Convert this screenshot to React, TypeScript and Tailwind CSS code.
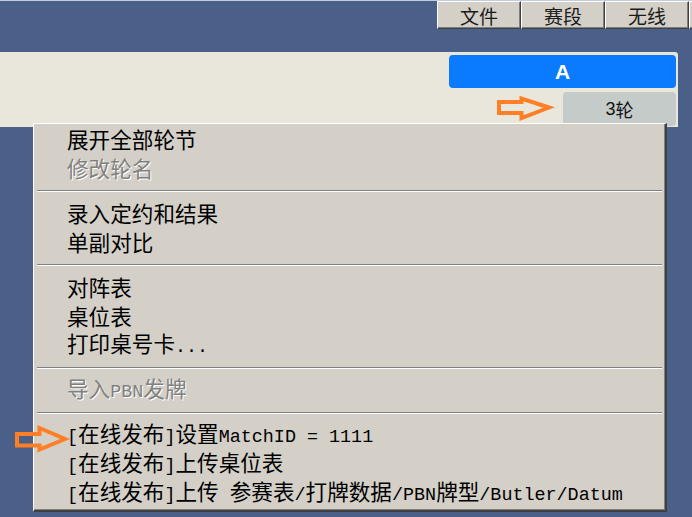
import React from 'react'

type Item = { label: string; disabled?: boolean } | 'sep'

const items: Item[] = [
  { label: '展开全部轮节' },
  { label: '修改轮名', disabled: true },
  'sep',
  { label: '录入定约和结果' },
  { label: '单副对比' },
  'sep',
  { label: '对阵表' },
  { label: '桌位表' },
  { label: '打印桌号卡...' },
  'sep',
  { label: '导入PBN发牌', disabled: true },
  'sep',
  { label: '[在线发布]设置MatchID = 1111' },
  { label: '[在线发布]上传桌位表' },
  { label: '[在线发布]上传 参赛表/打牌数据/PBN牌型/Butler/Datum' },
]

const cjk = "font-['Noto_Sans_CJK_SC',sans-serif]"
const mono = "font-['Liberation_Mono','Noto_Sans_CJK_SC',monospace]"

// split into ascii / cjk runs so each gets its own font and size
function MixedText({ text }: { text: string }) {
  const runs = text.match(/[\x00-\x7f]+|[^\x00-\x7f]+/g) ?? []
  return (
    <span className="whitespace-pre">
      {runs.map((r, i) =>
        /^[\x00-\x7f]/.test(r) ? (
          <span key={i} className={`${mono} text-[18.4px]`}>
            {r}
          </span>
        ) : (
          <span key={i} className={`${cjk} text-[21.6px]`}>
            {r}
          </span>
        )
      )}
    </span>
  )
}

function TopButton({ label }: { label: string }) {
  return (
    <div className="w-[84px] h-[28px] shrink-0 bg-[#d4d0c8] border-t border-l border-t-white border-l-white border-r border-b border-r-[#404040] border-b-[#404040] shadow-[inset_-1px_-1px_0_#808080] flex items-center justify-center">
      <span className={`${cjk} text-[19px] leading-none text-[#1a1a1a]`}>{label}</span>
    </div>
  )
}

export default function App() {
  return (
    <div className="relative w-[692px] h-[517px] overflow-hidden bg-[#4a6089]">
      <div className="h-px bg-[#c3cde0]" />
      <div className="flex h-[28px] pl-[437px]">
        <TopButton label="文件" />
        <TopButton label="赛段" />
        <TopButton label="无线" />
        <TopButton label="" />
      </div>

      <div className="mt-[23px] w-[678px] h-[75px] bg-[#e9e7dc] rounded-tr-[3px] flex flex-col items-end pt-[3px] pr-[2px] gap-[4px]">
        <div className="w-[227px] h-[33px] rounded-[4px] bg-[#0a7bff] flex items-center justify-center">
          <span className="font-['Liberation_Sans',sans-serif] font-bold text-[21px] text-white leading-none">A</span>
        </div>
        <div className="w-[113px] h-[34px] rounded-[4px] bg-[#c5cbc9] flex items-center justify-center text-[#111]">
          <span className="font-['Liberation_Sans',sans-serif] text-[18px] leading-none">3</span>
          <span className={`${cjk} text-[18px] leading-none`}>轮</span>
        </div>
      </div>

      {/* context menu */}
      <div className="absolute left-[33px] top-[123px] w-[634px] bg-[#d4d0c8] border-t border-l border-t-white border-l-white border-r-2 border-b-2 border-r-[#404040] border-b-[#404040] shadow-[inset_-1px_-1px_0_#808080] pt-[2px] pb-[1px]">
        {items.map((it, i) =>
          it === 'sep' ? (
            <div key={i} className="h-[16px] pt-[6px] px-[3px]">
              <div className="h-px bg-[#808080]" />
              <div className="h-px bg-white" />
            </div>
          ) : (
            <div
              key={i}
              className={`h-[29px] flex items-center pl-[33px] pb-[3px] leading-none ${
                it.disabled ? 'text-[#808080] [text-shadow:1px_1px_0_#ffffff]' : 'text-black'
              }`}
            >
              <MixedText text={it.label} />
            </div>
          )
        )}
      </div>

      <svg className="absolute inset-0 pointer-events-none" width="692" height="517">
        <polygon
          points="499,102 521.5,102 521.5,98.5 549,107.5 521.5,118 521.5,113 499,113"
          fill="none"
          stroke="#ff7f27"
          strokeWidth="4"
        />
        <polygon
          points="17,434 39.5,434 39.5,428 65,439 39.5,449.5 39.5,445.5 17,445.5"
          fill="none"
          stroke="#ff7f27"
          strokeWidth="4"
        />
      </svg>
    </div>
  )
}
